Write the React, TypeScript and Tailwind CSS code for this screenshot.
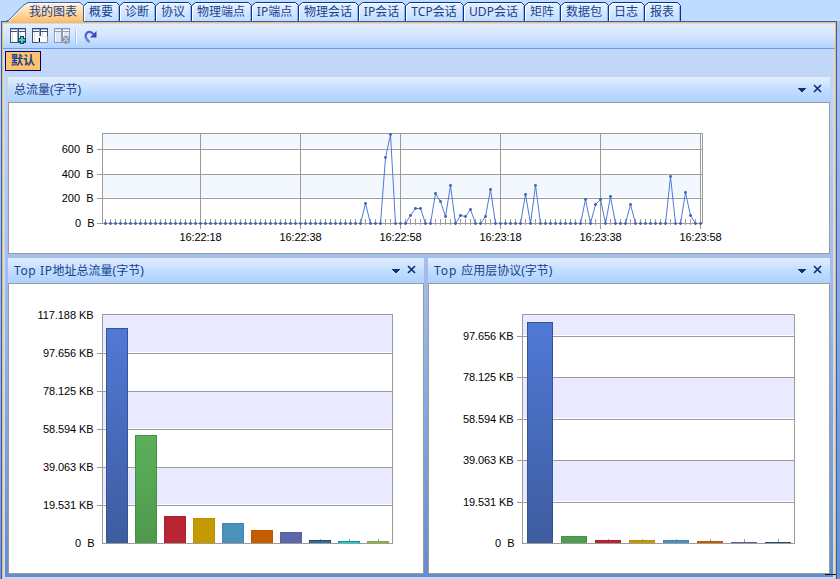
import React from 'react';

const cjk = 'font-["Noto_Sans","Noto_Sans_CJK_SC",sans-serif]';

const tabs = [
  { label: '概要', width: 36 },
  { label: '诊断', width: 36 },
  { label: '协议', width: 36 },
  { label: '物理端点', width: 60 },
  { label: 'IP端点', width: 47 },
  { label: '物理会话', width: 60 },
  { label: 'IP会话', width: 47 },
  { label: 'TCP会话', width: 58 },
  { label: 'UDP会话', width: 61 },
  { label: '矩阵', width: 36 },
  { label: '数据包', width: 48 },
  { label: '日志', width: 36 },
  { label: '报表', width: 36 },
];

// x -> y of every non-zero sample, the rest sit on the baseline
const samples: Record<number, number> = {
  365: 203, 385: 157, 390: 134, 410: 215, 415: 208, 420: 208, 435: 193, 440: 201,
  445: 216, 450: 185, 460: 215, 465: 216, 470: 209, 485: 216, 490: 189, 525: 194,
  535: 185, 585: 199, 595: 204, 600: 199, 610: 196, 630: 204, 670: 176, 685: 192, 690: 215,
};
const xs = Array.from({ length: 120 }, (_, i) => 105 + i * 5);

type Bar = { top: number; fill: string; edge: string; light?: string };
type Tick = { y: number; label: string };

const ipBars: Bar[] = [
  { top: 328, light: '#5079d6', fill: '#3e5c9f', edge: '#365399' },
  { top: 435, light: '#5cb05a', fill: '#4f994d', edge: '#459044' },
  { top: 516, fill: '#b92532', edge: '#b01f2c' },
  { top: 518, fill: '#c49a00', edge: '#b88f00' },
  { top: 523, fill: '#4b91ba', edge: '#3f87b1' },
  { top: 530, fill: '#c45d00', edge: '#bc5700' },
  { top: 532, fill: '#5b67a8', edge: '#525fa2' },
  { top: 540, fill: '#356b9e', edge: '#234b72' },
  { top: 541, fill: '#00d5e4', edge: '#0096a4' },
  { top: 541, fill: '#8fb744', edge: '#86a843' },
];

const appBars: Bar[] = [
  { top: 322, light: '#5079d6', fill: '#3e5c9f', edge: '#365399' },
  { top: 536, fill: '#4f9e4d', edge: '#459044' },
  { top: 540, fill: '#b92532', edge: '#b01f2c' },
  { top: 540, fill: '#c49a00', edge: '#b88f00' },
  { top: 540, fill: '#4b91ba', edge: '#3f87b1' },
  { top: 541, fill: '#c45d00', edge: '#bc5700' },
  { top: 542, fill: '#5b67a8', edge: '#525fa2' },
  { top: 542, fill: '#234b72', edge: '#234b72' },
];

const ipTicks: Tick[] = [
  { y: 314, label: '117.188 KB' },
  { y: 353, label: '97.656 KB' },
  { y: 391, label: '78.125 KB' },
  { y: 429, label: '58.594 KB' },
  { y: 467, label: '39.063 KB' },
  { y: 505, label: '19.531 KB' },
];

const appTicks: Tick[] = [
  { y: 336, label: '97.656 KB' },
  { y: 377, label: '78.125 KB' },
  { y: 419, label: '58.594 KB' },
  { y: 460, label: '39.063 KB' },
  { y: 502, label: '19.531 KB' },
];

function Tab({ label, width }: { label: string; width: number }) {
  return (
    <div className="relative h-[19px] shrink-0 text-center" style={{ width }}>
      <svg className="absolute inset-0" width={width} height={19}>
        <path d={`M0 19V4L4 .5H${width - 4}L${width - 0.5} 3.5V19Z`} fill="url(#tabFill)" />
        <path d={`M.5 19V4L4 1.5H${width - 4}`} fill="none" stroke="#fff" />
        <path d={`M0 3.5L3.5 .5H${width - 3.5}L${width - 0.5} 3.5V19`} fill="none" stroke="#00349a" />
        <path d={`M${width - 1.5} 4V19`} stroke="#8fb4ec" />
      </svg>
      <span className="relative block whitespace-nowrap pr-[2px] text-[12px] leading-[20px] text-[#15428b]">{label}</span>
    </div>
  );
}

function TabBar() {
  return (
    <div className="flex h-[21px] shrink-0 pt-[2px]">
      <div className="relative h-[19px] w-[84px] shrink-0">
        <svg className="absolute inset-0 overflow-visible" width="84" height="20">
          <defs>
            <linearGradient id="activeFill" x1="0" y1="0" x2="0" y2="1">
              <stop offset="0" stopColor="#fff3e0" />
              <stop offset=".5" stopColor="#ffdba8" />
              <stop offset="1" stopColor="#ffbd69" />
            </linearGradient>
            <linearGradient id="tabFill" x1="0" y1="0" x2="0" y2="1">
              <stop offset="0" stopColor="#e9f3ff" />
              <stop offset="1" stopColor="#c2dbff" />
            </linearGradient>
          </defs>
          <path d="M8 20L24 3L29 .5H80L83.5 3.5V20Z" fill="url(#activeFill)" />
          <path d="M9 19L25 3.5L30 1.5H80" fill="none" stroke="#fff" />
          <path d="M6 19.5L9 18L23 3.5L28 .5H80L83.5 3.5V19" fill="none" stroke="#3b619c" />
        </svg>
        <span className="relative block whitespace-nowrap pl-[29px] text-[12px] leading-[20px] text-[#15428b]">我的图表</span>
      </div>
      {tabs.map((t) => (
        <Tab key={t.label} label={t.label} width={t.width} />
      ))}
    </div>
  );
}

function TableIcon({ line, head }: { line: string; head: string }) {
  return (
    <>
      <rect x=".5" y=".5" width="15" height="14" fill="#fff" stroke={line} />
      <path d="M1 1.5H15" stroke={head} />
      <path d="M1 3.5H15M8.5 1V14" stroke={line} />
      <path d="M2.5 4V14M10.5 4V14" stroke="#d3deea" />
      <path d="M7.5 1V14" stroke="#8fa2bd" />
    </>
  );
}

function Toolbar() {
  return (
    <div className="flex h-[25px] shrink-0 items-start border-b border-[#6f9ddb] bg-linear-to-b from-[#e1eeff] via-[#d3e5ff] to-[#b0d2ff] pl-[7px] pt-[4px]">
      <svg width="16" height="16" className="mr-[6px]">
        <TableIcon line="#3d5177" head="#9fb7dc" />
        <path d="M10 8h4v2h2v4h-2v2h-4v-2H8v-4h2z" fill="#0c4d55" />
        <path d="M11 9h2v2h2v2h-2v2h-2v-2H9v-2h2z" fill="#5cc4b6" />
      </svg>
      <svg width="16" height="16" className="mr-[6px]">
        <TableIcon line="#3d5177" head="#9fb7dc" />
        <rect x="6" y="8" width="10" height="7" fill="#fff" />
        <path d="M15.500 8V14.500H6" fill="none" stroke="#7d8ba3" />
        <path d="M6 8.5H15M6.5 8V14" stroke="#dfe6f0" />
        <path d="M7.5 10V14" stroke="#000" />
      </svg>
      <svg width="16" height="16">
        <TableIcon line="#8a9db8" head="#c3cedf" />
        <path d="M2 4h5v10H2zM10 4h5v4h-5z" fill="#dde7f4" />
        <circle cx="11.800" cy="11.800" r="4" fill="#8b99ae" />
        <path d="M9 9h1v1h1v1h2v-1h1V9M9 14h1v-1h1v-1h2v1h1v1" fill="none" stroke="#c9d2de" />
      </svg>
      <div className="ml-[5px] mt-[2px] h-[14px] w-[2px] border-l border-r border-l-[#9ac6ff] border-r-white" />
      <svg width="14" height="14" className="ml-[7px] mt-px">
        <path d="M5.5 12.8C1.800 10.500 .8 7 2.500 4.300C4 2.200 7 2.200 9.300 5" fill="none" stroke="#4a5fd0" strokeWidth="2.200" />
        <path d="M5.5 12.8C3.500 11.500 2.300 10 2 8" fill="none" stroke="#7d92e2" strokeWidth="1.200" />
        <path d="M12.500 2V8.500H6Z" fill="#3249b8" />
      </svg>
    </div>
  );
}

function PanelHeader({ title }: { title: React.ReactNode }) {
  return (
    <div className="flex h-[25px] shrink-0 items-center bg-linear-to-b from-[#e3eeff] via-[#c3ddff] to-[#aed1ff] pl-[6px] text-[#15428b]">
      <span className="whitespace-nowrap text-[12px] leading-[25px]">{title}</span>
      <svg width="8" height="4" className="ml-auto mt-px" shapeRendering="crispEdges">
        <path d="M0 0H8V1H7V2H6V3H5V4H3V3H2V2H1V1H0Z" fill="#0c3470" />
      </svg>
      <svg width="9" height="9" className="ml-[7px] mr-[8px] mb-[2px]">
        <path d="M1 1L8 8M8 1L1 8" stroke="#0c3470" strokeWidth="1.7" />
      </svg>
    </div>
  );
}

function Label({ x, y, end, length, children }: { x: number; y: number; end?: boolean; length?: number; children: string }) {
  return (
    <text
      x={x}
      y={y}
      textAnchor={end ? 'end' : 'middle'}
      textLength={length}
      className="whitespace-pre fill-black font-['Liberation_Sans',Arial,sans-serif] text-[11px]"
    >
      {children}
    </text>
  );
}

function TrafficChart() {
  return (
    <svg width="820" height="150" viewBox="9 103 820 150" className="block">
      <g shapeRendering="crispEdges">
        <rect x="103" y="134" width="597" height="14" fill="#f3f8ff" />
        <rect x="103" y="175" width="597" height="22" fill="#f3f8ff" />
        <rect x="102.500" y="133.500" width="600" height="90" fill="none" stroke="#9b9b9b" />
        <path d="M97 149.500H702M97 174.500H702M97 198.500H702M97 223.500H102" stroke="#9b9b9b" />
        {[200, 300, 400, 500, 600, 700].map((x) => (
          <path key={x} d={`M${x + 0.5} 133V229`} stroke="#9b9b9b" />
        ))}
        {xs.map((x) => (
          <path key={x} d={`M${x + 0.5} 219V225`} stroke="#9b9b9b" />
        ))}
      </g>
      <polyline
        points={xs.map((x) => `${x + 0.5},${(samples[x] ?? 223) + 0.5}`).join(' ')}
        fill="none"
        stroke="#507ad6"
        strokeWidth="1"
      />
      <path d="M103 223.500H702" stroke="#9b9b9b" />
      {xs.map((x) => (
        <circle key={x} cx={x + 0.5} cy={(samples[x] ?? 223) + 0.5} r="1.400" fill="#3f60b0" />
      ))}
      <Label x={93.500} y={153} end>{'600  B'}</Label>
      <Label x={93.500} y={178} end>{'400  B'}</Label>
      <Label x={93.500} y={202} end>{'200  B'}</Label>
      <Label x={94.500} y={227} end>{'0  B'}</Label>
      {['16:22:18', '16:22:38', '16:22:58', '16:23:18', '16:23:38', '16:23:58'].map((t, i) => (
        <Label key={t} x={200.500 + i * 100} y={241} length={42}>{t}</Label>
      ))}
    </svg>
  );
}

type BarChartProps = {
  id: string;
  origin: number;
  width: number;
  left: number;
  right: number;
  first: number;
  barWidth: number;
  step: number;
  bars: Bar[];
  ticks: Tick[];
  bands: number[][];
};

function BarChart({ id, origin, width, left, right, first, barWidth, step, bars, ticks, bands }: BarChartProps) {
  return (
    <svg width={width} height="289" viewBox={`${origin} 284 ${width} 289`} className="block">
      <g shapeRendering="crispEdges">
        {bands.map(([from, to]) => (
          <rect key={from} x={left + 1} y={from} width={right - left - 1} height={to - from} fill="#e9e9ff" />
        ))}
        <rect x={left + 0.5} y="314.500" width={right - left} height="229" fill="none" stroke="#9b9b9b" />
        {ticks.map((t) => (
          <path key={t.y} d={`M${t.y === 314 ? left : left - 5} ${t.y + 0.5}H${right}`} stroke="#9b9b9b" />
        ))}
        {bars.map((b, i) => {
          const x = first + i * step;
          return (
            <g key={i}>
              <path d={`M${x + barWidth / 2 + 0.5} 539V543`} stroke="#9b9b9b" />
              {b.light && (
                <linearGradient id={`${id}${i}`} x1="0" y1="0" x2="0" y2="1">
                  <stop offset="0" stopColor={b.light} />
                  <stop offset="1" stopColor={b.fill} />
                </linearGradient>
              )}
              <rect x={x} y={b.top} width={barWidth} height={543 - b.top} fill={b.edge} />
              <rect x={x + 1} y={b.top + 1} width={barWidth - 2} height={542 - b.top} fill={b.light ? `url(#${id}${i})` : b.fill} />
            </g>
          );
        })}
        <path d={`M${left} 543.500H${right + 1}`} stroke="#9b9b9b" />
      </g>
      {ticks.map((t) => (
        <Label key={t.y} x={left - 8.5} y={t.y === 314 ? 319 : t.y + 4} end length={t.label.length > 9 ? 56 : 50.5}>
          {t.label}
        </Label>
      ))}
      <Label x={left - 7.5} y={547} end>{'0  B'}</Label>
    </svg>
  );
}

export default function App() {
  return (
    <div className={`${cjk} relative flex h-[579px] w-[840px] flex-col overflow-hidden bg-[#bfdbff]`}>
      <TabBar />
      <div className="flex min-h-0 flex-1">
        <div className="w-px bg-linear-to-b from-[#bfdbff] to-[#6f99d8]" />
        <div className="flex w-[836px] flex-col border-x border-t border-[#3b619c]">
          <div className="flex min-h-0 flex-1 flex-col border-x border-t border-[#fbb765] bg-[#c5dcfc] pt-px">
            <div className="flex min-h-0 flex-1 flex-col">
              <Toolbar />
              <div className="flex flex-1 pb-[2px] pl-[2px] pr-[2px]">
                <div className="flex w-[828px] flex-col bg-linear-to-b from-[#c3d9f9] via-[#9ebce9] via-45% to-[#648dcd] pr-[3px]">
                  <div className="h-[28px] pt-[2px]">
                    <div className="flex h-[20px] w-[36px] items-center justify-center border border-[#00007f] bg-[#ffc06f] text-[12px] font-bold text-[#15428b]">
                      默认
                    </div>
                  </div>
                  <div className="flex flex-col gap-[4px] pl-[3px]">
                    <section>
                      <PanelHeader title="总流量(字节)" />
                      <div className="h-[152px] border border-[#9b9b9b] bg-white">
                        <TrafficChart />
                      </div>
                    </section>
                    <div className="flex gap-[4px]">
                      <section className="w-[416px]">
                        <PanelHeader title={<><span className="tracking-[0.6px]">Top IP</span>地址总流量(字节)</>} />
                        <div className="h-[291px] border border-[#9b9b9b] bg-white">
                          <BarChart id="ip" origin={9} width={414} left={102} right={392} first={106} barWidth={22} step={29} bars={ipBars} ticks={ipTicks} bands={[[315, 352], [392, 428], [468, 504]]} />
                        </div>
                      </section>
                      <section className="w-[402px]">
                        <PanelHeader title={<><span className="tracking-[0.9px]">Top </span>应用层协议(字节)</>} />
                        <div className="h-[291px] border border-[#9b9b9b] bg-white">
                          <BarChart id="app" origin={429} width={400} left={522} right={794} first={527} barWidth={26} step={34} bars={appBars} ticks={appTicks} bands={[[315, 335], [378, 418], [461, 501]]} />
                        </div>
                      </section>
                    </div>
                  </div>
                </div>
              </div>
            </div>
          </div>
        </div>
        <div className="w-[3px] bg-linear-to-b from-[#a5c3ef] to-[#6690d0]" />
      </div>
      <div className="absolute bottom-[4px] right-[4px] h-px w-[11px] bg-[#101820]" />
    </div>
  );
}
